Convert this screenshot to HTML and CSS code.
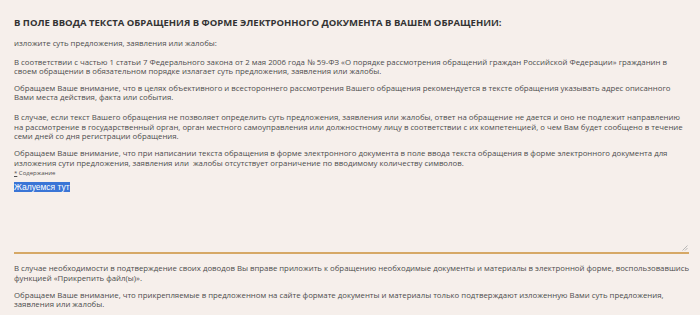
FILE: index.html
```html
<!DOCTYPE html>
<html lang="ru">
<head>
<meta charset="utf-8">
<link rel="stylesheet" href="styles.css">
</head>
<body>
<div class="page">
  <h2 class="title">В ПОЛЕ ВВОДА ТЕКСТА ОБРАЩЕНИЯ В ФОРМЕ ЭЛЕКТРОННОГО ДОКУМЕНТА В ВАШЕМ ОБРАЩЕНИИ:</h2>
  <p class="lead">изложите суть предложения, заявления или жалобы:</p>
  <p class="p1">В соответствии с частью 1 статьи 7 Федерального закона от 2 мая 2006 года № 59-ФЗ «О порядке рассмотрения обращений граждан Российской Федерации» гражданин в своем обращении в обязательном порядке излагает суть предложения, заявления или жалобы.</p>
  <p class="p2">Обращаем Ваше внимание, что в целях объективного и всестороннего рассмотрения Вашего обращения рекомендуется в тексте обращения указывать адрес описанного Вами места действия, факта или события.</p>
  <p class="p3">В случае, если текст Вашего обращения не позволяет определить суть предложения, заявления или жалобы, ответ на обращение не дается и оно не подлежит направлению на рассмотрение в государственный орган, орган местного самоуправления или должностному лицу в соответствии с их компетенцией, о чем Вам будет сообщено в течение семи дней со дня регистрации обращения.</p>
  <p class="p4">Обращаем Ваше внимание, что при написании текста обращения в форме электронного документа в поле ввода текста обращения в форме электронного документа для изложения сути предложения, заявления или&nbsp; жалобы отсутствует ограничение по вводимому количеству символов.</p>
  <div class="label"><span class="req">*</span> Содержание</div>
  <div class="field">
    <div class="field-text"><span class="sel">Жалуемся тут</span></div>
    <svg class="grip" width="6" height="6" viewBox="0 0 6 6"><path d="M5.5 0.5 L0.5 5.5 M5.5 3 L3 5.5" stroke="#aaa" stroke-width="0.8" fill="none"/></svg>
  </div>
  <p class="p5">В случае необходимости в подтверждение своих доводов Вы вправе приложить к обращению необходимые документы и материалы в электронной форме, воспользовавшись функцией «Прикрепить файл(ы)».</p>
  <p class="p6">Обращаем Ваше внимание, что прикрепляемые в предложенном на сайте формате документы и материалы только подтверждают изложенную Вами суть предложения, заявления или жалобы.</p>
</div>
</body>
</html>
```

FILE: styles.css
```css
html, body {
  margin: 0;
  padding: 0;
  background: #f6efeb;
}
.page {
  padding: 16px 10px 0 14px;
  font-family: "Open Sans", "Noto Sans", sans-serif;
  font-size: 7.8px;
  line-height: 9.5px;
  color: #4d4d4d;
}
.title {
  margin: 0 0 9px;
  font-size: 9.5px;
  line-height: 14px;
  font-weight: 700;
  color: #333;
}
p {
  margin: 0;
}
.lead {
  margin-bottom: 9px;
}
.p1 {
  margin-bottom: 7px;
}
.p2 {
  margin-bottom: 10.5px;
}
.p3 {
  margin-bottom: 7.5px;
}
.p4 {
  margin-bottom: 1px;
}
.label {
  font-size: 6px;
  line-height: 8px;
}
.req {
  text-decoration: underline;
}
.field {
  position: relative;
  height: 70px;
  margin: 5px 1px 10px 0;
  border-bottom: 2px solid #d6a866;
}
.field-text {
  font-family: "Liberation Sans", Arial, sans-serif;
  font-size: 8.5px;
  line-height: 10px;
  color: #fff;
}
.sel {
  background: #3a75d6;
}
.grip {
  position: absolute;
  right: 1px;
  bottom: 1px;
}
.p5 {
  margin-bottom: 7.5px;
}
```
